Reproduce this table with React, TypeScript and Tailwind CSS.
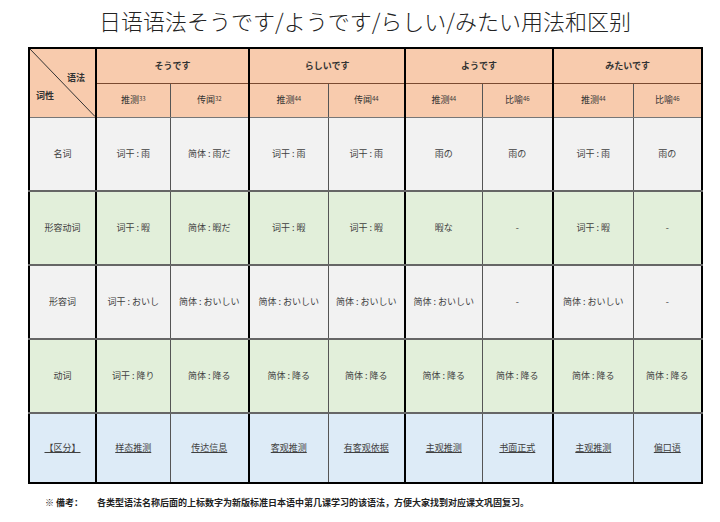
import React from 'react';

const font = { fontFamily: '"Noto Sans CJK SC", "Noto Sans", sans-serif' };

const groups = ['そうです', 'らしいです', 'ようです', 'みたいです'];

const subs: [string, string][] = [
  ['推测', '33'],
  ['传闻', '32'],
  ['推测', '44'],
  ['传闻', '44'],
  ['推测', '44'],
  ['比喻', '46'],
  ['推测', '44'],
  ['比喻', '46'],
];

const rows = [
  {
    label: '名词',
    bg: 'bg-[#f2f2f2]',
    cells: ['词干 : 雨', '简体 : 雨だ', '词干 : 雨', '词干 : 雨', '雨の', '雨の', '词干 : 雨', '雨の'],
  },
  {
    label: '形容动词',
    bg: 'bg-[#e2efda]',
    cells: ['词干 : 暇', '简体 : 暇だ', '词干 : 暇', '词干 : 暇', '暇な', '-', '词干 : 暇', '-'],
  },
  {
    label: '形容词',
    bg: 'bg-[#f2f2f2]',
    cells: ['词干 : おいし', '简体 : おいしい', '简体 : おいしい', '简体 : おいしい', '简体 : おいしい', '-', '简体 : おいしい', '-'],
  },
  {
    label: '动词',
    bg: 'bg-[#e2efda]',
    cells: ['词干 : 降り', '简体 : 降る', '简体 : 降る', '简体 : 降る', '简体 : 降る', '简体 : 降る', '简体 : 降る', '简体 : 降る'],
  },
];

const kinds = ['样态推测', '传达信息', '客观推测', '有客观依据', '主观推测', '书面正式', '主观推测', '偏口语'];

const widths = [67, 74, 79, 79, 77, 77, 71, 80, 69];

// odd sub columns close a group with a thick line
const cellBorder = (i: number) =>
  i % 2 === 1 ? 'border-r-2 border-r-black' : 'border-r border-r-[#555]';

const App = () => {
  return (
    <div className="w-[720px] h-[522px] bg-white text-[#404040]" style={font}>
      <div className="ml-[28px] w-[674px]">
        <h1 className="pt-[5px] h-[47px] text-center text-[22px] leading-[30px] font-light text-[#222]">
          日语语法そうです/ようです/らしい/みたい用法和区别
        </h1>
        <table className="table-fixed border-collapse w-[674px] border-2 border-black text-[9px] text-center">
          <colgroup>
            {widths.map((w, i) => (
              <col key={i} style={{ width: w }} />
            ))}
          </colgroup>
          <thead>
            <tr className="bg-[#f8cbad] h-[35px]">
              <th
                rowSpan={2}
                className="relative border-r-2 border-r-black border-b border-b-[#777] p-0 font-bold"
              >
                <svg className="absolute inset-0 w-full h-full" preserveAspectRatio="none" viewBox="0 0 100 100">
                  <line x1="0" y1="0" x2="100" y2="100" stroke="#333" strokeWidth="1" vectorEffect="non-scaling-stroke" />
                </svg>
                <span className="absolute right-[10px] top-[22px] text-[#333]">语法</span>
                <span className="absolute left-[6px] top-[40px] text-[#333]">词性</span>
              </th>
              {groups.map((g) => (
                <th
                  key={g}
                  colSpan={2}
                  className="border-r-2 border-r-black border-b border-b-[#7a4a30] font-bold text-[#333]"
                >
                  {g}
                </th>
              ))}
            </tr>
            <tr className="bg-[#f8cbad] h-[34px]">
              {subs.map(([t, n], i) => (
                <th key={i} className={`${cellBorder(i)} border-b border-b-[#777] font-normal text-[#333]`}>
                  {t}
                  <sup className="text-[6px] relative -top-[2px]">{n}</sup>
                </th>
              ))}
            </tr>
          </thead>
          <tbody>
            {rows.map((r) => (
              <tr key={r.label} className={`${r.bg} h-[74px]`}>
                <td className="border-r-2 border-r-black border-b-2 border-b-[#666]">{r.label}</td>
                {r.cells.map((c, i) => (
                  <td key={i} className={`${cellBorder(i)} border-b-2 border-b-[#666] whitespace-nowrap`}>
                    {c}
                  </td>
                ))}
              </tr>
            ))}
            <tr className="bg-[#ddebf7] h-[70px]">
              <td className="border-r-2 border-r-black">
                <span className="underline">【区分】</span>
              </td>
              {kinds.map((k, i) => (
                <td key={i} className={cellBorder(i)}>
                  <span className="underline">{k}</span>
                </td>
              ))}
            </tr>
          </tbody>
        </table>
      </div>
      <div className="flex mt-[12px] text-[9px] font-bold text-[#222]">
        <span className="ml-[45px] w-[52px]">※ 備考：</span>
        <span>各类型语法名称后面的上标数字为新版标准日本语中第几课学习的该语法，方便大家找到对应课文巩固复习。</span>
      </div>
    </div>
  );
};

export default App;
